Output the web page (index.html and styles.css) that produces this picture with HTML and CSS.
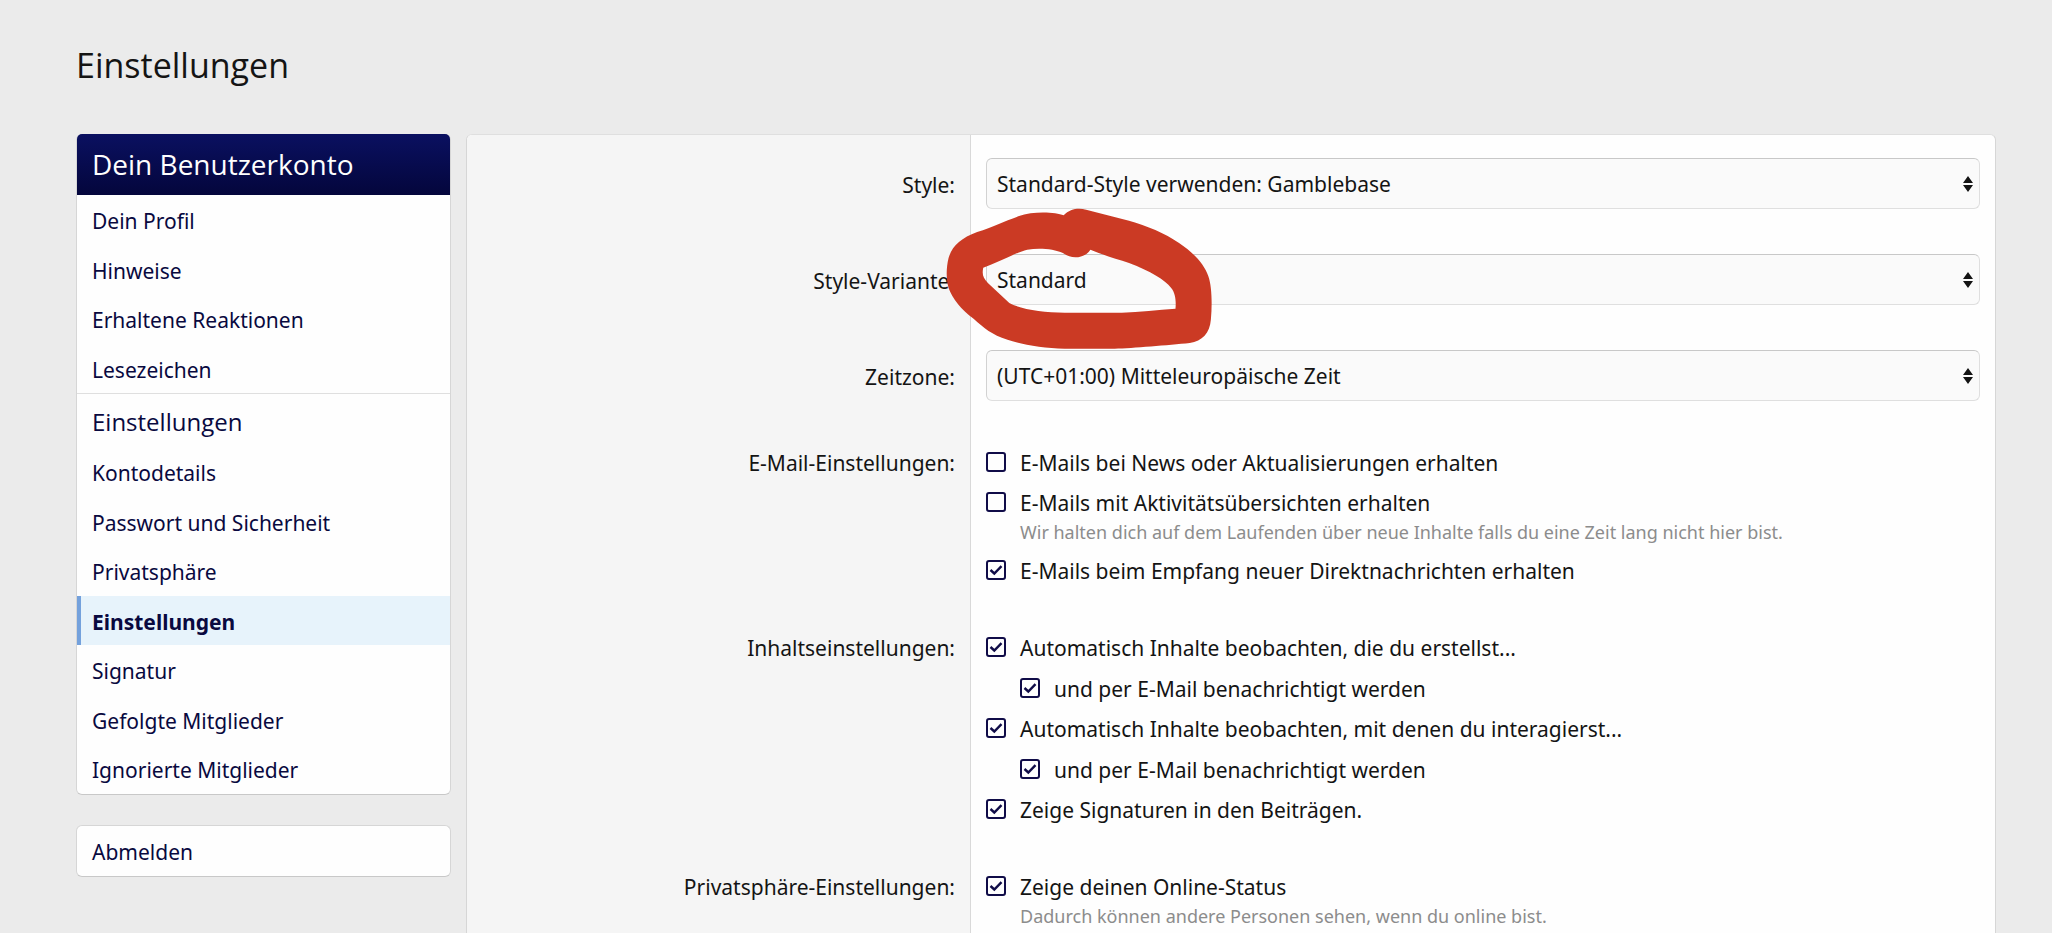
FILE: index.html
```html
<!DOCTYPE html>
<html lang="de">
<head>
    <meta charset="UTF-8">
    <meta name="viewport" content="width=device-width, initial-scale=1.0">
    <title>Einstellungen</title>

    <link rel="stylesheet" href="styles.css">
</head>
<body>

<h1>Einstellungen</h1>

<div class="page">

    <!-- Account navigation -->
    <aside class="sidebar">
        <nav class="block">
            <h2>Dein Benutzerkonto</h2>
            <ul class="links">
                <li><a href="#">Dein Profil</a></li>
                <li><a href="#">Hinweise</a></li>
                <li><a href="#">Erhaltene Reaktionen</a></li>
                <li><a href="#">Lesezeichen</a></li>
            </ul>
            <h3>Einstellungen</h3>
            <ul class="links">
                <li><a href="#">Kontodetails</a></li>
                <li><a href="#">Passwort und Sicherheit</a></li>
                <li><a href="#">Privatsphäre</a></li>
                <li><a href="#" class="active">Einstellungen</a></li>
                <li><a href="#">Signatur</a></li>
                <li><a href="#">Gefolgte Mitglieder</a></li>
                <li><a href="#">Ignorierte Mitglieder</a></li>
            </ul>
        </nav>
        <div class="block">
            <ul class="links">
                <li><a href="#">Abmelden</a></li>
            </ul>
        </div>
    </aside>

    <form class="panel">
        <div class="row row-select">
            <div class="label"><label for="style">Style:</label></div>
            <div class="field">
                <select id="style">
                    <option>Standard-Style verwenden: Gamblebase</option>
                </select>
            </div>
        </div>

        <div class="row row-select">
            <div class="label"><label for="variation">Style-Variante:</label></div>
            <div class="field">
                <select id="variation">
                    <option>Standard</option>
                </select>
                <!-- Red marker around the variation -->
                <svg class="marker" viewBox="125 262 750 429" preserveAspectRatio="none" aria-hidden="true">
                    <path fill="#cb3a24" fill-rule="evenodd" d="M457 287C435 278 375 273 330 290C290 305 260 322 215 337C170 355 145 378 135 415C128 445 128 480 135 505C145 535 170 570 205 597C235 625 255 645 300 660C340 675 400 686 460 687L600 687C650 686 750 676 810 670C845 664 866 640 869 600C873 555 872 500 862 470C850 430 815 395 780 370C740 340 690 318 640 303L520 270C500 264 475 266 457 287ZM232 444C228 465 232 475 245 490C265 510 285 530 305 550C340 570 400 578 460 579L620 579C670 577 720 571 770 567C772 545 770 520 758 505C740 480 700 455 640 430C605 418 565 405 532 390C520 408 505 413 490 413C475 413 462 405 455 400C430 388 390 384 355 390C320 400 275 428 232 444Z"/>
                </svg>
            </div>
        </div>

        <div class="row row-select">
            <div class="label"><label for="timezone">Zeitzone:</label></div>
            <div class="field">
                <select id="timezone">
                    <option>(UTC+01:00) Mitteleuropäische Zeit</option>
                </select>
            </div>
        </div>

        <div class="row">
            <div class="label" id="emailLabel">E-Mail-Einstellungen:</div>
            <ul class="field choices" role="group" aria-labelledby="emailLabel">
                <li><label><input type="checkbox"> E-Mails bei News oder Aktualisierungen erhalten</label></li>
                <li>
                    <label><input type="checkbox"> E-Mails mit Aktivitätsübersichten erhalten</label>
                    <p class="hint">Wir halten dich auf dem Laufenden über neue Inhalte falls du eine Zeit lang nicht hier bist.</p>
                </li>
                <li><label><input type="checkbox" checked> E-Mails beim Empfang neuer Direktnachrichten erhalten</label></li>
            </ul>
        </div>

        <div class="row">
            <div class="label" id="contentLabel">Inhaltseinstellungen:</div>
            <ul class="field choices" role="group" aria-labelledby="contentLabel">
                <li>
                    <label><input type="checkbox" checked> Automatisch Inhalte beobachten, die du erstellst...</label>
                    <ul class="nested">
                        <li><label><input type="checkbox" checked> und per E-Mail benachrichtigt werden</label></li>
                    </ul>
                </li>
                <li>
                    <label><input type="checkbox" checked> Automatisch Inhalte beobachten, mit denen du interagierst...</label>
                    <ul class="nested">
                        <li><label><input type="checkbox" checked> und per E-Mail benachrichtigt werden</label></li>
                    </ul>
                </li>
                <li><label><input type="checkbox" checked> Zeige Signaturen in den Beiträgen.</label></li>
            </ul>
        </div>

        <div class="row row-last">
            <div class="label" id="privacyLabel">Privatsphäre-Einstellungen:</div>
            <ul class="field choices" role="group" aria-labelledby="privacyLabel">
                <li>
                    <label><input type="checkbox" checked> Zeige deinen Online-Status</label>
                    <p class="hint">Dadurch können andere Personen sehen, wenn du online bist.</p>
                </li>
            </ul>
        </div>
    </form>

</div>

</body>
</html>
```
FILE: styles.css
```css
* {
    box-sizing: border-box;
}

body {
    display: flex;
    flex-direction: column;
    min-height: 100vh;
    margin: 0;
    padding: 0 56px 0 76px;
    background-color: #ebebeb;
    color: #141414;
    font-family: 'Noto Sans', 'Open Sans', sans-serif;
    font-size: 21px;
    line-height: 30px;
}

h1, h2, h3, p, ul {
    margin: 0;
    padding: 0;
    font-weight: normal;
}

h1, h2, h3 {
    font-family: 'Open Sans', 'Noto Sans', sans-serif;
}

ul {
    list-style: none;
}

h1 {
    padding: 41px 0 45px;
    font-size: 34px;
    line-height: 48px;
}

.page {
    display: flex;
    flex: 1;
    gap: 15px;
}

/* Sidebar */

.sidebar {
    flex: 0 0 375px;
}

.block {
    margin-bottom: 30px;
    background-color: #fefefe;
    border: 1px solid #d6d6d6;
    border-bottom-color: #c8c8c8;
    border-radius: 6px;
}

.block h2 {
    margin-top: -1px;
    padding: 0 15px;
    background: linear-gradient(#0a1060, #04063c);
    border-radius: 5px 5px 0 0;
    color: #fefefe;
    font-size: 28px;
    line-height: 61px;
}

.block h3 {
    padding: 3px 15px 0;
    border-top: 1px solid #dfdfdf;
    color: #09093f;
    font-size: 24px;
    line-height: 50px;
}

.links {
    display: grid;
    grid-auto-rows: 50px 49px;
}

.links a {
    display: block;
    height: 100%;
    padding: 11px 15px 0;
    color: #09093f;
    text-decoration: none;
}

.links a.active {
    padding-left: 11px;
    background-color: #e7f3fb;
    border-left: 4px solid #74a1dc;
    font-weight: bold;
}

/* Settings form */

.panel {
    display: flex;
    flex: 1;
    flex-direction: column;
    background-color: #fefefe;
    border: 1px solid #d6d6d6;
    border-top-color: #dfdfdf;
    border-bottom: none;
    border-radius: 6px 6px 0 0;
}

.row {
    display: flex;
}

.row-last {
    flex: 1;
}

.label {
    flex: 0 0 504px;
    padding: 25px 15px 0 0;
    background-color: #f5f5f5;
    border-right: 1px solid #d9d9d9;
    text-align: right;
}

.row:first-child .label {
    border-top-left-radius: 5px;
}

.row-select .label {
    padding-top: 35px;
}

.field {
    position: relative;
    flex: 1;
    padding: 23px 15px 22px;
}

select {
    display: block;
    width: 100%;
    height: 51px;
    padding: 0 30px 0 10px;
    appearance: none;
    background: #fafafa url("data:image/svg+xml,%3Csvg xmlns='http://www.w3.org/2000/svg' width='10' height='16'%3E%3Cpath fill='%23141414' d='M5 0L10 7H0zM5 16L0 9H10z'/%3E%3C/svg%3E") no-repeat right 6px center;
    border: 1px solid #dfdfdf;
    border-top-color: #c8c8c8;
    border-left-color: #d2d2d2;
    border-radius: 6px;
    color: #141414;
    font: inherit;
}

.marker {
    position: absolute;
    top: -24px;
    left: -26px;
    width: 268px;
    height: 143px;
    pointer-events: none;
    z-index: 1;
}

.choices {
    display: flex;
    flex-direction: column;
    gap: 10px;
    padding-top: 25px;
}

.row-last .choices {
    padding-bottom: 0;
}

.choices label {
    display: flex;
    gap: 14px;
}

.choices input {
    flex: none;
    width: 20px;
    height: 20px;
    margin: 4px 0 0;
    appearance: none;
    border: 2px solid #100c48;
    border-radius: 3px;
}

.choices input:checked {
    background: url("data:image/svg+xml,%3Csvg xmlns='http://www.w3.org/2000/svg' width='16' height='16'%3E%3Cpath fill='none' stroke='%23100c48' stroke-width='2.4' d='M2.5 8L6.3 11.5L13.5 4.2'/%3E%3C/svg%3E") no-repeat center;
}

.nested {
    padding: 11px 0 0 34px;
}

.hint {
    padding-left: 34px;
    color: #8c8c8c;
    font-size: 18px;
    line-height: 28px;
}
```
